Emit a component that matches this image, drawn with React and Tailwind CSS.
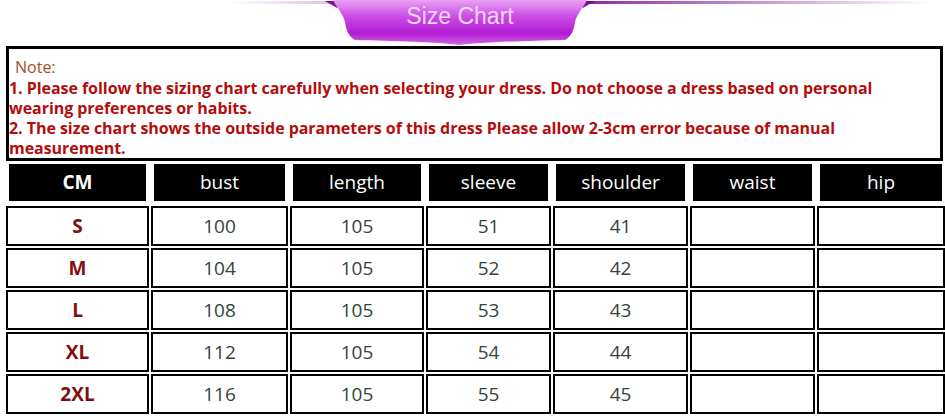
import React from 'react'

const cols = ['CM', 'bust', 'length', 'sleeve', 'shoulder', 'waist', 'hip']

const rows = [
  ['S', '100', '105', '51', '41', '', ''],
  ['M', '104', '105', '52', '42', '', ''],
  ['L', '108', '105', '53', '43', '', ''],
  ['XL', '112', '105', '54', '44', '', ''],
  ['2XL', '116', '105', '55', '45', '', ''],
]

function Ribbon() {
  return (
    <svg width="270" height="46" viewBox="0 0 270 46" className="absolute left-0 top-0">
      <defs>
        <linearGradient id="rb" x1="0" y1="0" x2="0" y2="1">
          <stop offset="0" stopColor="#e8a2f4" />
          <stop offset="0.35" stopColor="#cc4fe6" />
          <stop offset="0.75" stopColor="#b21bd2" />
          <stop offset="1" stopColor="#d36ae8" />
        </linearGradient>
        <linearGradient id="fold" x1="0" y1="0" x2="0" y2="1">
          <stop offset="0" stopColor="#6a0a80" />
          <stop offset="1" stopColor="#9a22b2" />
        </linearGradient>
      </defs>
      <path d="M0 1 L14 1 L12 8 Z" fill="url(#fold)" />
      <path d="M270 1 L256 1 L258 8 Z" fill="url(#fold)" />
      <path
        d="M8 0 L262 0 C258 8 252 14 250 22 C249 30 246 37 240 40 C200 41 160 42 135 45 C110 42 70 41 30 40 C24 37 21 30 20 22 C18 14 12 8 8 0 Z"
        fill="url(#rb)"
      />
    </svg>
  )
}

export default function App() {
  return (
    <div className="w-[945px] h-[416px] bg-white overflow-hidden" style={{ fontFamily: '"Open Sans", sans-serif' }}>
      {/* banner */}
      <div className="relative h-[46px]">
        <div className="absolute left-[230px] right-[15px] top-[1px] h-[3px] bg-gradient-to-r from-[#ffffff] via-[#8a1aa0] to-[#ffffff]" />
        <div className="absolute left-[325px] top-0 w-[270px] h-[46px]">
          <Ribbon />
          <div
            className="relative text-center pt-[3px] text-[23px] leading-[26px] text-[#f3d8f8]"
            style={{ fontFamily: '"Liberation Sans", Arial, sans-serif' }}
          >
            Size Chart
          </div>
        </div>
      </div>

      {/* note */}
      <div className="ml-[6px] mr-[2px] h-[115px] border-[3px] border-black pl-0 pr-[40px] pt-[8px]">
        <div className="pl-[6px] text-[16px] leading-[21px] text-[#a0502a]">Note:</div>
        <div className="text-[16px] leading-[20px] font-bold text-[#b30d0d] tracking-[-0.05px]">
          1. Please follow the sizing chart carefully when selecting your dress. Do not choose a dress based on personal wearing preferences or habits.
          <br />
          2. The size chart shows the outside parameters of this dress Please allow 2-3cm error because of manual measurement.
        </div>
      </div>

      {/* table */}
      <div className="grid grid-cols-[143px_137px_134px_125px_135px_125px_128px] gap-x-[2px] gap-y-[2px] ml-[6px]">
        {cols.map((c, i) => (
          <div key={c} className="h-[43px] p-[3px] bg-white">
            <div
              className={
                'h-full bg-black text-white text-[19px] flex items-center justify-center ' +
                (i === 0 ? 'font-bold' : '')
              }
            >
              {c}
            </div>
          </div>
        ))}
        {rows.map((r) =>
          r.map((v, i) => (
            <div
              key={r[0] + i}
              className={
                'h-[40px] border-2 border-black flex items-center justify-center text-[19px] ' +
                (i === 0 ? 'font-bold text-[#7d0f0f]' : 'text-[#34443a]')
              }
            >
              {v}
            </div>
          ))
        )}
      </div>
    </div>
  )
}
